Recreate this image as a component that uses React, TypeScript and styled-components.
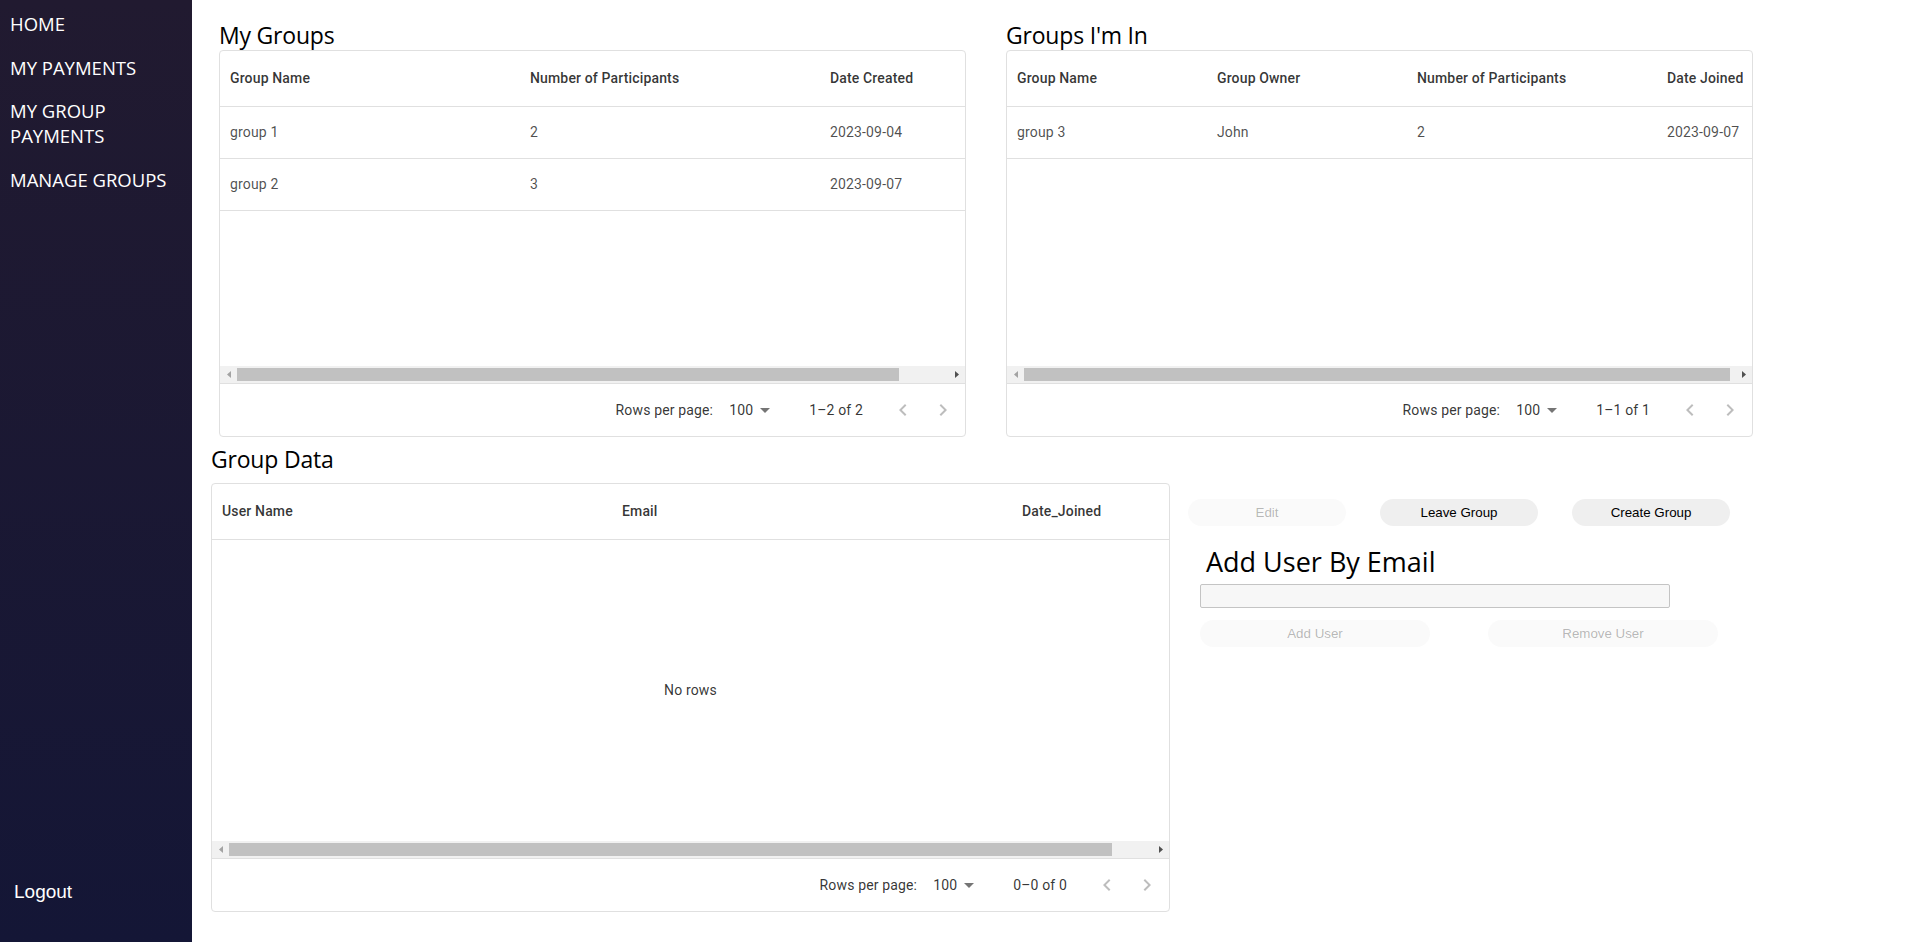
import React from "react";
import styled, { createGlobalStyle } from "styled-components";

const GlobalStyle = createGlobalStyle`
  *, *::before, *::after { box-sizing: border-box; }
  html, body { margin: 0; padding: 0; background: #ffffff; }
  body { font-family: "Open Sans", "Noto Sans", sans-serif; }
`;

const Page = styled.div`
  display: flex;
  width: 100%;
  height: 100vh;
  overflow: hidden;
`;

const Sidebar = styled.aside`
  flex: 0 0 192px;
  width: 192px;
  display: flex;
  flex-direction: column;
  padding: 11px 10px 39px;
  background: linear-gradient(180deg, #211a30 0%, #141636 100%);
`;

const NavList = styled.ul`
  list-style: none;
  margin: 0;
  padding: 0;
  display: flex;
  flex-direction: column;
  gap: 18.5px;
`;

const NavLink = styled.a`
  display: block;
  color: #ffffff;
  font-family: "Open Sans", sans-serif;
  font-size: 18.5px;
  line-height: 25px;
  text-decoration: none;
`;

const LogoutButton = styled.button`
  margin-top: auto;
  align-self: flex-start;
  margin-left: 4px;
  padding: 0;
  border: none;
  background: none;
  color: #ffffff;
  font-family: "Liberation Sans", Arial, sans-serif;
  font-size: 19px;
  line-height: 22px;
  cursor: pointer;
`;

const Main = styled.main`
  flex: 1;
  min-width: 0;
  display: flex;
  flex-direction: column;
  padding-top: 20px;
`;

const TopRow = styled.div`
  display: flex;
  gap: 40px;
  padding-left: 27px;
`;

const BottomRow = styled.div`
  display: flex;
  align-items: flex-start;
  padding-left: 19px;
  margin-top: 7px;
`;

const Section = styled.section<{ $w: number }>`
  width: ${(p) => p.$w}px;
  flex: 0 0 ${(p) => p.$w}px;
  display: flex;
  flex-direction: column;
`;

const Title = styled.h2<{ $gap?: number }>`
  margin: 0 0 ${(p) => p.$gap ?? 0}px;
  padding-top: 1px;
  font-family: "Open Sans", sans-serif;
  font-weight: 400;
  font-size: 23px;
  line-height: 29px;
  letter-spacing: -0.2px;
  color: #000000;
`;

/* ---------- data grid ---------- */

const GridRoot = styled.div<{ $h: number }>`
  height: ${(p) => p.$h}px;
  border: 1px solid rgb(224, 224, 224);
  border-radius: 4px;
  display: flex;
  flex-direction: column;
  overflow: hidden;
  font-family: Roboto, "Liberation Sans", sans-serif;
  font-size: 14px;
  color: rgba(0, 0, 0, 0.8);
  letter-spacing: 0.01071em;
`;

const Viewport = styled.div`
  flex: 1;
  min-height: 0;
  overflow: hidden;
  display: flex;
  flex-direction: column;
`;

const HeaderRow = styled.div<{ $cw: number }>`
  display: flex;
  flex: 0 0 56px;
  padding-bottom: 1px;
  min-width: ${(p) => p.$cw}px;
  border-bottom: 1px solid rgb(224, 224, 224);
`;

const HeaderCell = styled.div<{ $w: number }>`
  flex: 0 0 ${(p) => p.$w}px;
  display: flex;
  align-items: center;
  padding: 0 10px;
  font-weight: 500;
  color: rgba(0, 0, 0, 0.8);
  white-space: nowrap;
  overflow: hidden;
`;

const Body = styled.div`
  flex: 1;
  display: flex;
  flex-direction: column;
  min-height: 0;
`;

const Row = styled.div<{ $cw: number }>`
  display: flex;
  flex: 0 0 52px;
  padding-bottom: 1px;
  min-width: ${(p) => p.$cw}px;
  border-bottom: 1px solid rgb(224, 224, 224);
`;

const Cell = styled.div<{ $w: number }>`
  flex: 0 0 ${(p) => p.$w}px;
  display: flex;
  align-items: center;
  padding: 0 10px;
  color: rgba(0, 0, 0, 0.7);
  white-space: nowrap;
  overflow: hidden;
`;

const EmptyState = styled.div`
  flex: 1;
  display: flex;
  align-items: center;
  justify-content: center;
  padding-bottom: 1px;
`;

const HScrollbar = styled.div`
  flex: 0 0 17px;
  display: flex;
  background: #f1f1f1;
`;

const ScrollArrow = styled.div<{ $active?: boolean }>`
  flex: 0 0 17px;
  display: flex;
  align-items: center;
  justify-content: center;
  color: ${(p) => (p.$active ? "#505050" : "#a3a3a3")};
`;

const ScrollTrack = styled.div`
  flex: 1;
  display: flex;
  align-items: center;
`;

const ScrollThumb = styled.div`
  height: 13px;
  background: #c1c1c1;
`;

const Footer = styled.div`
  flex: 0 0 53px;
  display: flex;
  align-items: center;
  justify-content: flex-end;
  padding-right: 2px;
  border-top: 1px solid rgb(224, 224, 224);
`;

const PageLabel = styled.p`
  margin: 0;
  font-size: 14px;
  line-height: 20px;
`;

const SelectBox = styled.div`
  display: flex;
  align-items: center;
  margin: 0 32px 0 8px;
  padding-left: 8px;
  font-size: 14px;
  line-height: 20px;
`;

const DropIcon = styled.svg`
  width: 24px;
  height: 24px;
  fill: rgba(0, 0, 0, 0.54);
`;

const Actions = styled.div`
  display: flex;
  margin-left: 20px;
`;

const IconBtn = styled.button`
  width: 40px;
  height: 40px;
  padding: 8px;
  border: none;
  background: none;
  display: flex;
  align-items: center;
  justify-content: center;
  color: rgba(0, 0, 0, 0.26);
  svg {
    width: 24px;
    height: 24px;
    fill: currentColor;
  }
`;

type Column = { header: string; width: number };

type GridProps = {
  width: number;
  height: number;
  columns: Column[];
  rows: string[][];
  range: string;
};

function DataGrid({ width, height, columns, rows, range }: GridProps) {
  const inner = width - 2;
  const content = columns.reduce((s, c) => s + c.width, 0);
  const thumb = Math.min(100, (inner / content) * 100);
  return (
    <GridRoot $h={height}>
      <Viewport>
        <HeaderRow $cw={content}>
          {columns.map((c) => (
            <HeaderCell key={c.header} $w={c.width}>
              {c.header}
            </HeaderCell>
          ))}
        </HeaderRow>
        <Body>
          {rows.length === 0 ? (
            <EmptyState>No rows</EmptyState>
          ) : (
            rows.map((r, ri) => (
              <Row key={ri} $cw={content}>
                {r.map((v, i) => (
                  <Cell key={i} $w={columns[i].width}>
                    {v}
                  </Cell>
                ))}
              </Row>
            ))
          )}
        </Body>
      </Viewport>
      <HScrollbar>
        <ScrollArrow>
          <svg width="4" height="7" viewBox="0 0 4 7">
            <path d="M4 0 L0 3.5 L4 7 Z" fill="currentColor" />
          </svg>
        </ScrollArrow>
        <ScrollTrack>
          <ScrollThumb style={{ width: `${thumb}%` }} />
        </ScrollTrack>
        <ScrollArrow $active>
          <svg width="4" height="7" viewBox="0 0 4 7">
            <path d="M0 0 L4 3.5 L0 7 Z" fill="currentColor" />
          </svg>
        </ScrollArrow>
      </HScrollbar>
      <Footer>
        <PageLabel>Rows per page:</PageLabel>
        <SelectBox>
          100
          <DropIcon viewBox="0 0 24 24">
            <path d="M7 10l5 5 5-5z" />
          </DropIcon>
        </SelectBox>
        <PageLabel>{range}</PageLabel>
        <Actions>
          <IconBtn disabled aria-label="previous page">
            <svg viewBox="0 0 24 24">
              <path d="M15.41 16.59 10.83 12l4.58-4.59L14 6l-6 6 6 6 1.41-1.41z" />
            </svg>
          </IconBtn>
          <IconBtn disabled aria-label="next page">
            <svg viewBox="0 0 24 24">
              <path d="M8.59 16.59 13.17 12 8.59 7.41 10 6l6 6-6 6-1.41-1.41z" />
            </svg>
          </IconBtn>
        </Actions>
      </Footer>
    </GridRoot>
  );
}

/* ---------- side panel ---------- */

const SidePanel = styled.div`
  display: flex;
  flex-direction: column;
  padding: 55px 0 0 18px;
`;

const ButtonRow = styled.div<{ $gap: number; $indent?: number }>`
  display: flex;
  gap: ${(p) => p.$gap}px;
  margin-left: ${(p) => p.$indent ?? 0}px;
`;

const PillButton = styled.button<{ $w: number }>`
  width: ${(p) => p.$w}px;
  height: 27px;
  padding: 0 6px;
  border: none;
  border-radius: 14px;
  background: #efefef;
  color: #000000;
  font-family: "Liberation Sans", Arial, sans-serif;
  font-size: 13.333px;
  cursor: pointer;
  &:disabled {
    background: rgba(239, 239, 239, 0.3);
    color: rgba(16, 16, 16, 0.3);
    cursor: default;
  }
`;

const FormTitle = styled.h2`
  margin: 19px 0 5px 18px;
  font-family: "Open Sans", sans-serif;
  font-weight: 400;
  font-size: 27px;
  line-height: 34px;
  color: #000000;
`;

const EmailInput = styled.input`
  width: 470px;
  height: 24px;
  margin: 0 0 12px 12px;
  padding: 1px 2px;
  border: 1px solid #c4c4c4;
  border-radius: 2px;
  background: #f7f7f7;
  font-family: "Liberation Sans", Arial, sans-serif;
  font-size: 13.333px;
`;

const myGroupsCols: Column[] = [
  { header: "Group Name", width: 300 },
  { header: "Number of Participants", width: 300 },
  { header: "Date Created", width: 200 },
];

const myGroupsRows = [
  ["group 1", "2", "2023-09-04"],
  ["group 2", "3", "2023-09-07"],
];

const inCols: Column[] = [
  { header: "Group Name", width: 200 },
  { header: "Group Owner", width: 200 },
  { header: "Number of Participants", width: 250 },
  { header: "Date Joined", width: 100 },
];

const inRows = [["group 3", "John", "2", "2023-09-07"]];

const dataCols: Column[] = [
  { header: "User Name", width: 400 },
  { header: "Email", width: 400 },
  { header: "Date_Joined", width: 200 },
];

const navItems = ["HOME", "MY PAYMENTS", "MY GROUP PAYMENTS", "MANAGE GROUPS"];

export default function App() {
  return (
    <>
      <GlobalStyle />
      <Page>
        <Sidebar>
          <NavList>
            {navItems.map((n) => (
              <li key={n}>
                <NavLink href="#">{n}</NavLink>
              </li>
            ))}
          </NavList>
          <LogoutButton>Logout</LogoutButton>
        </Sidebar>
        <Main>
          <TopRow>
            <Section $w={747}>
              <Title>My Groups</Title>
              <DataGrid width={747} height={387} columns={myGroupsCols} rows={myGroupsRows} range="1–2 of 2" />
            </Section>
            <Section $w={747}>
              <Title>Groups I'm In</Title>
              <DataGrid width={747} height={387} columns={inCols} rows={inRows} range="1–1 of 1" />
            </Section>
          </TopRow>
          <BottomRow>
            <Section $w={959}>
              <Title $gap={9}>Group Data</Title>
              <DataGrid width={959} height={429} columns={dataCols} rows={[]} range="0–0 of 0" />
            </Section>
            <SidePanel>
              <ButtonRow $gap={34}>
                <PillButton $w={158} disabled>Edit</PillButton>
                <PillButton $w={158}>Leave Group</PillButton>
                <PillButton $w={158}>Create Group</PillButton>
              </ButtonRow>
              <FormTitle>Add User By Email</FormTitle>
              <EmailInput type="email" />
              <ButtonRow $gap={58} $indent={12}>
                <PillButton $w={230} disabled>Add User</PillButton>
                <PillButton $w={230} disabled>Remove User</PillButton>
              </ButtonRow>
            </SidePanel>
          </BottomRow>
        </Main>
      </Page>
    </>
  );
}
